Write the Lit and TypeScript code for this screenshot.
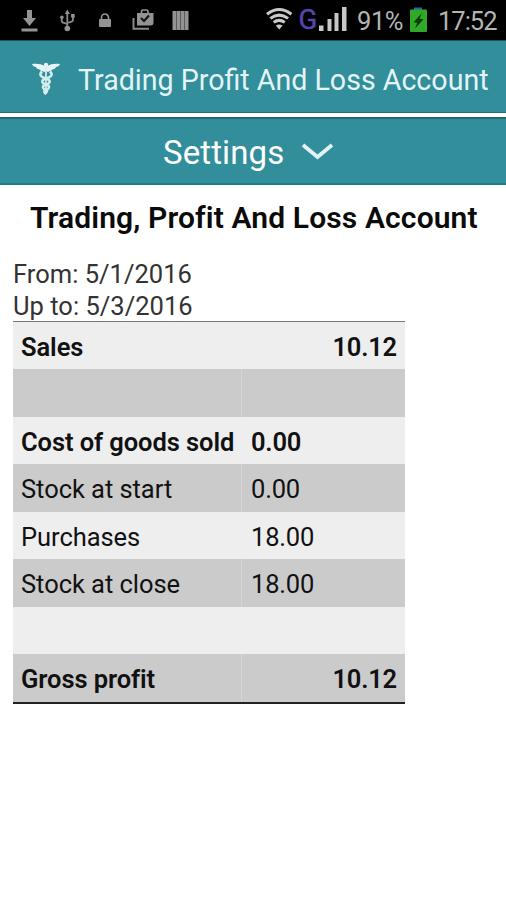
import { LitElement, html, css, svg } from "lit";
import { customElement } from "lit/decorators.js";
import { classMap } from "lit/directives/class-map.js";

interface Row {
  label: string;
  value: string;
  bold?: boolean;
  end?: boolean;
}

const ROWS: Row[] = [
  { label: "Sales", value: "10.12", bold: true, end: true },
  { label: "", value: "" },
  { label: "Cost of goods sold", value: "0.00", bold: true },
  { label: "Stock at start", value: "0.00" },
  { label: "Purchases", value: "18.00" },
  { label: "Stock at close", value: "18.00" },
  { label: "", value: "" },
  { label: "Gross profit", value: "10.12", bold: true, end: true },
];

@customElement("status-bar")
export class StatusBar extends LitElement {
  static styles = css`
    :host {
      display: block;
      height: 40px;
      background: #000;
      color: #b4b4b4;
    }
    .bar {
      display: grid;
      grid-template-columns: 266px 53px 38px 52px 29px 1fr;
      height: 40px;
      font-size: 25.5px;
      line-height: 42px;
      white-space: nowrap;
    }
    svg {
      display: block;
    }
    .g {
      color: #5a45b4;
      font-size: 27.5px;
      line-height: 40px;
      letter-spacing: -1px;
      -webkit-text-stroke: 0.4px #5a45b4;
    }
    .signal {
      display: grid;
      grid-template-columns: 32.5px 1fr;
    }
    .pct {
      letter-spacing: -0.4px;
    }
    .time {
      letter-spacing: -1px;
    }
  `;
  render() {
    return html`<div class="bar">
      <svg width="266" height="40" viewBox="0 0 266 40" fill="#939393">
        <path d="M27 10h5v8h4l-6.500 8-6.500-8h4z" />
        <rect x="21.500" y="28.500" width="16" height="3" />
        <g fill="none" stroke="#8a8a8a" stroke-width="1.800">
          <path d="M67.300 13v15M61.700 17v3.500q0 2 2 2.300l3.600 1M73 17v2.500q0 2-2 2.300l-3.700 1.200" />
        </g>
        <path d="M67.300 9.500l2.500 4.500h-5z" />
        <circle cx="67.300" cy="28.500" r="2.800" />
        <circle cx="61.900" cy="17.200" r="1.700" />
        <rect x="71.100" y="14" width="3.600" height="3.600" />
        <rect x="99" y="19" width="12" height="8" rx="1" />
        <path d="M101.500 19.500v-2a3.500 3.500 0 0 1 7 0v2" fill="none" stroke="#939393" stroke-width="1.700" />
        <path d="M133.500 18v10.700h15.500" fill="none" stroke="#8a8a8a" stroke-width="2" />
        <path d="M137 13h16.500v9.500q0 3-3 3H137z" />
        <path d="M141.500 13.500v-2q0-1.500 1.500-1.500h3.500q1.500 0 1.500 1.500v2" fill="none" stroke="#939393" stroke-width="1.700" />
        <path d="M141 18l3 3 5-5.500" fill="none" stroke="#111" stroke-width="2" />
        <rect x="172.500" y="11" width="16" height="19" />
        <path d="M176.500 11v19M180.500 11v19M184.500 11v19" stroke="#444" stroke-width=".7" />
      </svg>
      <div class="signal">
        <svg width="32" height="40" viewBox="0 0 32 40" fill="none" stroke="#c8c8c8" stroke-width="3">
          <path d="M1 14.200q12.200-9.400 24.400 0M4.300 18.400q8.900-6.600 17.800 0M7.600 22.400q5.600-4 11.200 0" />
          <path d="M9.800 25.400q3.400-2 6.800 0l-3.400 4.200z" fill="#c8c8c8" stroke="none" />
        </svg>
        <span class="g">G</span>
      </div>
      <svg width="38" height="40" viewBox="0 0 38 40" fill="#c8c8c8">
        <path d="M0 25.500h4.500V31H0zM8.500 19h4v12h-4zM15.500 13h4v18h-4zM23 7h4.500v24H23z" />
      </svg>
      <span class="pct">91%</span>
      <svg width="29" height="40" viewBox="0 0 29 40">
        <rect x="5" y="7.500" width="8" height="3" fill="#236a9c" />
        <rect x="1" y="9.500" width="17" height="22.500" rx="1" fill="#30a92a" />
        <path d="M13 13L4.500 22.300l3.800.4L6 28.500l8.500-9.300-4-.4z" fill="#0b3b08" />
      </svg>
      <span class="time">17:52</span>
    </div>`;
  }
}

const wing = svg`
  <path d="M13.500 4.500C9 1.500 4 1.500 0 2c.5 2 2.500 2.800 4 3 .3 1.700 2 2.300 3.500 2.300.3 1.500 2 1.700 3 1.600.5 1 2 1 3 .8z" />
`;

@customElement("app-root")
export class AppRoot extends LitElement {
  static styles = css`
    :host {
      display: block;
      box-sizing: border-box;
      height: 900px;
      overflow: hidden;
      background: #fff;
      color: #111;
      font-family: Roboto, "Liberation Sans", sans-serif;
    }
    .header {
      display: flex;
      align-items: center;
      box-sizing: border-box;
      height: 73px;
      padding: 4px 0 0 32px;
      background: #318e9a;
      border-top: 1px solid #155560;
      border-bottom: 1px solid #23717b;
    }
    .logo {
      flex: none;
      width: 28px;
      height: 34px;
      margin-right: 18px;
    }
    .title {
      margin-top: 2px;
      font-size: 28.6px;
      line-height: 34px;
      color: #e2f4f6;
      white-space: nowrap;
    }
    .settings {
      display: flex;
      box-sizing: border-box;
      height: 68px;
      margin-top: 4px;
      padding: 2px 0 0 163px;
      align-items: center;
      gap: 17px;
      background: #318e9a;
      border-top: 2px solid #206a74;
      border-bottom: 2px solid #1d7c88;
      color: #fff;
      font-size: 33px;
      letter-spacing: 0.1px;
    }
    .chevron {
      margin-top: -1px;
    }
    .content {
      padding: 0 13px;
    }
    .heading {
      margin: 14px 0 0;
      padding-left: 17px;
      font-size: 30px;
      line-height: 38px;
      font-weight: 600;
      letter-spacing: 0.13px;
      color: #0b0b0b;
      white-space: nowrap;
    }
    .range {
      margin-top: 22px;
      margin-bottom: -1px;
      font-size: 25.5px;
      line-height: 31.5px;
      letter-spacing: 0.02px;
      color: #333;
      white-space: nowrap;
    }
    .table {
      width: 392px;
      border-top: 1px solid #777;
      border-bottom: 2px solid #222;
    }
    .row {
      display: grid;
      grid-template-columns: 229px 1fr;
      grid-template-rows: 100%;
      height: 47.45px;
      line-height: 50px;
      background: #eee;
      font-size: 25.5px;
      letter-spacing: -0.05px;
      white-space: nowrap;
    }
    .row.dark {
      background: #cbcbcb;
    }
    .cell {
      padding: 0 8px;
      box-sizing: border-box;
    }
    .value {
      padding-left: 9px;
      letter-spacing: -0.2px;
    }
    .dark .label {
      border-right: 1px solid #d5d5d5;
    }
    .bold {
      font-weight: 600;
    }
    .bold .label {
      letter-spacing: -0.08px;
    }
    .end .value {
      text-align: right;
    }
  `;
  render() {
    return html`
      <status-bar></status-bar>
      <div class="header">
        <svg class="logo" viewBox="0 0 28 34" fill="#e6f5f6">
          ${wing}
          <g transform="translate(28 0) scale(-1 1)">${wing}</g>
          <circle cx="14" cy="3" r="2.200" />
          <path d="M13.200 4h1.600v28h-1.600z" />
          <g fill="none" stroke="#d4ecef" stroke-width="2.500">
            <path d="M10 9.500C6.500 13 9 15 14 16.500s5 4.500 0 6-3 4.500 0 5.500-1.500 3 0 4" />
            <path d="M18 9.500c3.500 3.500 1 5.500-4 7s-5 4.500 0 6 3 4.500 0 5.500-1.500 3 0 4" />
          </g>
        </svg>
        <span class="title">Trading Profit And Loss Account</span>
      </div>
      <div class="settings">
        <span class="settings-label">Settings</span>
        <svg class="chevron" width="34" height="20" viewBox="0 0 34 20" fill="none" stroke="#e2f3f5" stroke-width="3.800">
          <path d="M2 3L16.500 15 31 3" />
        </svg>
      </div>
      <div class="content">
        <h1 class="heading">Trading, Profit And Loss Account</h1>
        <div class="range">
          <div>From: 5/1/2016</div>
          <div>Up to: 5/3/2016</div>
        </div>
        <div class="table">
          ${ROWS.map(
            (r, i) => html`<div class=${classMap({ row: true, dark: i % 2 === 1, bold: !!r.bold, end: !!r.end })}>
              <span class="cell label">${r.label}</span><span class="cell value">${r.value}</span>
            </div>`
          )}
        </div>
      </div>
    `;
  }
}
